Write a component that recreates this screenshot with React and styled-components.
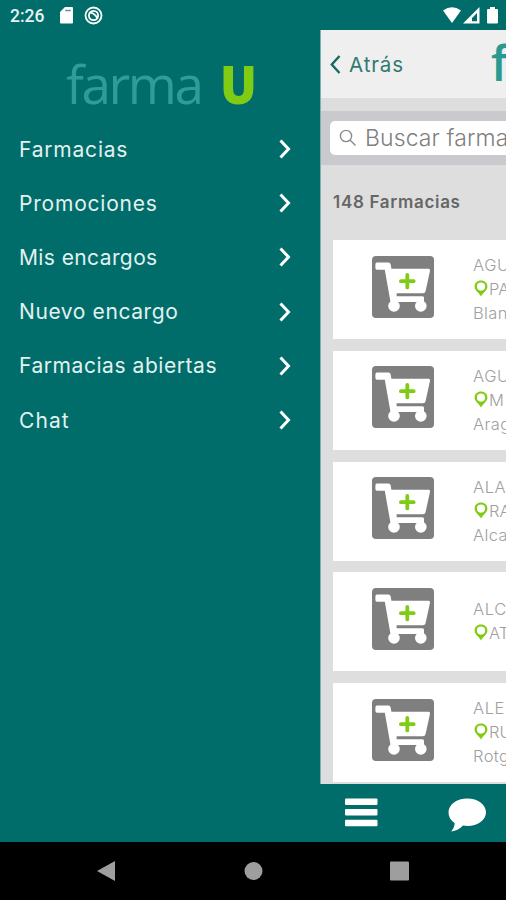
import React from 'react';
import styled, { createGlobalStyle } from 'styled-components';

const teal = '#006d6b';
const green = '#80cc14';

const GlobalStyle = createGlobalStyle`
  body {
    margin: 0;
    background-color: ${teal};
  }
`;

const Phone = styled.div`
  width: 506px;
  height: 900px;
  overflow: hidden;
  display: flex;
  flex-direction: column;
  background-color: ${teal};
  font-family: Inter, "Liberation Sans", sans-serif;
`;

const StatusBar = styled.div`
  height: 30px;
  flex: none;
  display: flex;
  align-items: flex-start;
  justify-content: space-between;
`;

const Clock = styled.span`
  font-family: Roboto, sans-serif;
  font-size: 17.5px;
  font-weight: 500;
  line-height: 30px;
  width: 49px;
  margin-top: 1px;
  padding-left: 10px;
  color: #e6f3f2;
`;

const StatusGroup = styled.div`
  display: flex;
`;

const Main = styled.div`
  display: flex;
  height: 812px;
  flex: none;
`;

const Drawer = styled.nav`
  width: 320px;
  flex: none;
`;

const Logo = styled.div`
  display: flex;
  height: 92px;
  padding-left: 66px;
  font-family: "Open Sans", sans-serif;
  font-size: 53px;
  line-height: 107px;
  color: #2d9c9a;
`;

const LogoName = styled.span`
  width: 154px;
  font-weight: 500;
  letter-spacing: -2.4px;
`;

const LogoMark = styled.span`
  color: ${green};
  font-weight: 800;
  transform: scaleX(0.92);
  transform-origin: left;
`;

const MenuItem = styled.div`
  display: flex;
  align-items: center;
  justify-content: space-between;
  height: 54.2px;
  padding: 0 29px 0 19px;
  color: #e3f1f0;
`;

const Label = styled.span`
  font-size: ${({ size }) => size || 21}px;
  font-weight: ${({ weight }) => weight || 400};
  letter-spacing: ${({ spacing }) => spacing || 0}px;
  white-space: nowrap;
`;

const Page = styled.main`
  width: 186px;
  flex: none;
  overflow: hidden;
  display: flex;
  flex-direction: column;
`;

const Content = styled.div`
  flex: 1;
  min-height: 0;
  display: flex;
  flex-direction: column;
  border-left: 1px solid #7fb0af;
  background-color: #dedede;
`;

const Header = styled.header`
  height: 68px;
  flex: none;
  display: flex;
  background-color: #efefef;
  border-bottom: 13px solid #dddddd;
`;

const Back = styled.div`
  display: flex;
  align-items: center;
  gap: 8px;
  width: 161px;
  padding-left: 9px;
  color: #2f7a70;
  flex: none;
`;

const HeaderLogo = styled.span`
  font-family: "Open Sans", sans-serif;
  font-size: 48px;
  font-weight: 600;
  line-height: 65px;
  color: #2a9990;
`;

const SearchBar = styled.div`
  height: 54px;
  flex: none;
  box-sizing: border-box;
  padding: 10px 0 10px 9px;
  background-color: #c9c9ce;
`;

const SearchField = styled.div`
  display: flex;
  align-items: center;
  gap: 8px;
  height: 34px;
  width: 240px;
  padding-left: 9px;
  border-radius: 5px;
  background-color: white;
  color: #808080;
`;

const Count = styled.div`
  height: 75px;
  flex: none;
  box-sizing: border-box;
  padding: 25px 0 0 12px;
  font-size: 17px;
  line-height: 24px;
  font-weight: 600;
  letter-spacing: 0.7px;
  color: #666666;
  white-space: nowrap;
`;

const List = styled.div`
  flex: 1;
  min-height: 0;
  overflow: hidden;
  display: flex;
  flex-direction: column;
  gap: 11.8px;
  padding-left: 12px;
`;

const Card = styled.div`
  height: 99px;
  width: 300px;
  flex: none;
  display: flex;
  align-items: center;
  background-color: white;
`;

const CartBox = styled.div`
  padding: 0 39px;
  height: 68px;
`;

const Address = styled.div`
  color: #a0a0a0;
  font-size: 16.5px;
  font-weight: 300;
  padding-bottom: 1px;
`;

const AddressLine = styled.div`
  display: flex;
  align-items: center;
  height: 24px;
  letter-spacing: ${({ spacing }) => spacing || 0}px;
  white-space: nowrap;
`;

const Footer = styled.footer`
  height: 58px;
  flex: none;
  display: flex;
  align-items: flex-start;
  gap: 70px;
  padding: 14px 0 0 25px;
  box-sizing: border-box;
  background-color: ${teal};
`;

const NavBar = styled.div`
  height: 58px;
  flex: none;
  background-color: black;
  display: flex;
  align-items: center;
  justify-content: space-between;
  padding: 0 96px;
`;

const ChevronRight = () => (
  <svg width="12" height="20" viewBox="0 0 12 20" fill="none" stroke="white" strokeWidth="3">
    <path d="M1.5 1.5 L9.5 10 L1.5 18.5" />
  </svg>
);

const ChevronLeft = () => (
  <svg width="11" height="19" viewBox="0 0 11 19" fill="none" stroke="#17695f" strokeWidth="2.4">
    <path d="M9.5 1 L1.8 9.5 L9.5 18" />
  </svg>
);

const SearchIcon = () => (
  <svg width="18" height="18" viewBox="0 0 18 18" fill="none" stroke="#8b8b8b" strokeWidth="1.4">
    <circle cx="7" cy="7" r="5.6" />
    <path d="M11 11 L16.5 16.5" />
  </svg>
);

const CartIcon = () => (
  <svg width="62" height="62" viewBox="0 0 62 62">
    <rect width="62" height="62" rx="4" fill="#7f7f7f" />
    <g fill="white">
      <path d="M5 6.6 H16.5 Q18.3 6.6 18.7 8.5 L19.4 12.8 H56.5 Q58.4 12.8 58 14.8 L53.6 35 Q53.1 37.2 51 37.2 H24.6 V40.2 H50.5 Q52 40.2 52 41.8 V46 H18.5 L12.8 13.8 H5 Q3.4 13.8 3.4 12 V8.4 Q3.4 6.6 5 6.6 Z" />
      <circle cx="22" cy="50" r="5.8" />
      <circle cx="48.8" cy="50" r="5.8" />
    </g>
    <path d="M35.3 19 V31.4 M28.9 25.2 H41.7" stroke={green} strokeWidth="3.8" strokeLinecap="round" />
  </svg>
);

const PinIcon = () => (
  <svg width="16" height="18" viewBox="0 0 16 18">
    <path
      fillRule="evenodd"
      fill={green}
      d="M8 0.6 C4.3 0.6 1.6 3.2 1.6 6.5 C1.6 10.4 5.6 12.6 8 16.4 C10.4 12.6 14.4 10.4 14.4 6.5 C14.4 3.2 11.7 0.6 8 0.6 Z M8 2.5 A4.1 4.1 0 1 1 8 10.7 A4.1 4.1 0 1 1 8 2.5 Z"
    />
  </svg>
);

const menu = [
  { name: 'Farmacias', spacing: 0.8 },
  { name: 'Promociones', spacing: 0.8 },
  { name: 'Mis encargos', spacing: 0.4 },
  { name: 'Nuevo encargo', spacing: 0.6 },
  { name: 'Farmacias abiertas', spacing: 0.56 },
  { name: 'Chat', spacing: 1.1 },
];

const pharmacies = [
  { name: 'AGU', street: 'PA', city: 'Blan' },
  { name: 'AGU', street: 'M', city: 'Arag' },
  { name: 'ALA', street: 'RA', city: 'Alca' },
  { name: 'ALC', street: 'AT' },
  { name: 'ALE', street: 'RU', city: 'Rotg' },
];

function StatusIcons() {
  return (
    <svg width="64" height="30" viewBox="442 0 64 30" fill="white">
      <path d="M443 10.5 Q452 4 461 10.5 L452 23 Z" />
      <path d="M479.5 7 V23.5 H463 Z M477 13 L472 18 V21.2 H477 Z" fillRule="evenodd" />
      <path d="M490 7 H495 V9 H497 Q498 9 498 10 V22.5 Q498 23.5 497 23.5 H488 Q487 23.5 487 22.5 V10 Q487 9 488 9 H490 Z" />
    </svg>
  );
}

function PharmacyCard({ pharmacy }) {
  return (
    <Card>
      <CartBox>
        <CartIcon />
      </CartBox>
      <Address>
        <AddressLine spacing={0.6}>{pharmacy.name}</AddressLine>
        <AddressLine>
          <PinIcon />
          {pharmacy.street}
        </AddressLine>
        {pharmacy.city && <AddressLine spacing={0.4}>{pharmacy.city}</AddressLine>}
      </Address>
    </Card>
  );
}

export default function App() {
  return (
    <Phone>
      <GlobalStyle />
      <StatusBar>
        <StatusGroup>
          <Clock>2:26</Clock>
          <svg width="45" height="30" viewBox="59 0 45 30" fill="none">
            <path fill="white" d="M65 7 H72 Q73 7 73 8 V22.5 Q73 23.5 72 23.5 H61 Q60 23.5 60 22.5 V12 Z" />
            <path d="M65.5 10.5 H70.5" stroke={teal} strokeWidth="1.6" strokeDasharray="1.3 0.6" />
            <circle cx="93.5" cy="15.5" r="8" stroke="white" strokeWidth="1.8" />
            <circle cx="93.5" cy="15.5" r="4.6" stroke="white" strokeWidth="1.8" />
            <path d="M90 13 Q94 12.5 97.5 18.5" stroke="white" strokeWidth="1.8" />
          </svg>
        </StatusGroup>
        <StatusIcons />
      </StatusBar>
      <Main>
        <Drawer>
          <Logo>
            <LogoName>farma</LogoName>
            <LogoMark>U</LogoMark>
          </Logo>
          {menu.map((item) => (
            <MenuItem key={item.name}>
              <Label spacing={item.spacing}>{item.name}</Label>
              <ChevronRight />
            </MenuItem>
          ))}
        </Drawer>
        <Page>
          <Content>
            <Header>
              <Back>
                <ChevronLeft />
                <Label size={20.5} spacing={0.9}>Atrás</Label>
              </Back>
              <HeaderLogo>f</HeaderLogo>
            </Header>
            <SearchBar>
              <SearchField>
                <SearchIcon />
                <Label size={23} weight={300} spacing={0.1}>Buscar farmacia</Label>
              </SearchField>
            </SearchBar>
            <Count>148 Farmacias</Count>
            <List>
              {pharmacies.map((pharmacy, i) => (
                <PharmacyCard key={i} pharmacy={pharmacy} />
              ))}
            </List>
          </Content>
          <Footer>
            <svg width="33" height="30" viewBox="0 0 33 30" fill="white">
              <rect y="0.5" width="32.5" height="6.5" rx="1" />
              <rect y="11" width="32.5" height="6.5" rx="1" />
              <rect y="21.7" width="32.5" height="6.5" rx="1" />
            </svg>
            <svg width="39" height="35" viewBox="0 0 39 35" fill="white">
              <path d="M19.3 0.4 C29.8 0.4 38 6.6 38 14.3 C38 22.2 29.8 28 19.3 28 C17.8 28 16.4 27.9 15 27.6 C12 30.8 8.3 33 3.2 33.4 C5.2 31 6.5 28.5 6.7 25.2 C2.8 22.6 0.5 18.8 0.5 14.3 C0.5 6.6 8.8 0.4 19.3 0.4 Z" />
            </svg>
          </Footer>
        </Page>
      </Main>
      <NavBar>
        <svg width="20" height="22" viewBox="0 0 20 22" fill="#9e9e9e">
          <path d="M1 11 L19 1 V21 Z" />
        </svg>
        <svg width="20" height="20" viewBox="0 0 20 20" fill="#9e9e9e">
          <circle cx="10.5" cy="10" r="9" />
        </svg>
        <svg width="20" height="20" viewBox="0 0 20 20" fill="#9e9e9e">
          <rect x="0" y="0.5" width="19" height="19" rx="1" />
        </svg>
      </NavBar>
    </Phone>
  );
}
